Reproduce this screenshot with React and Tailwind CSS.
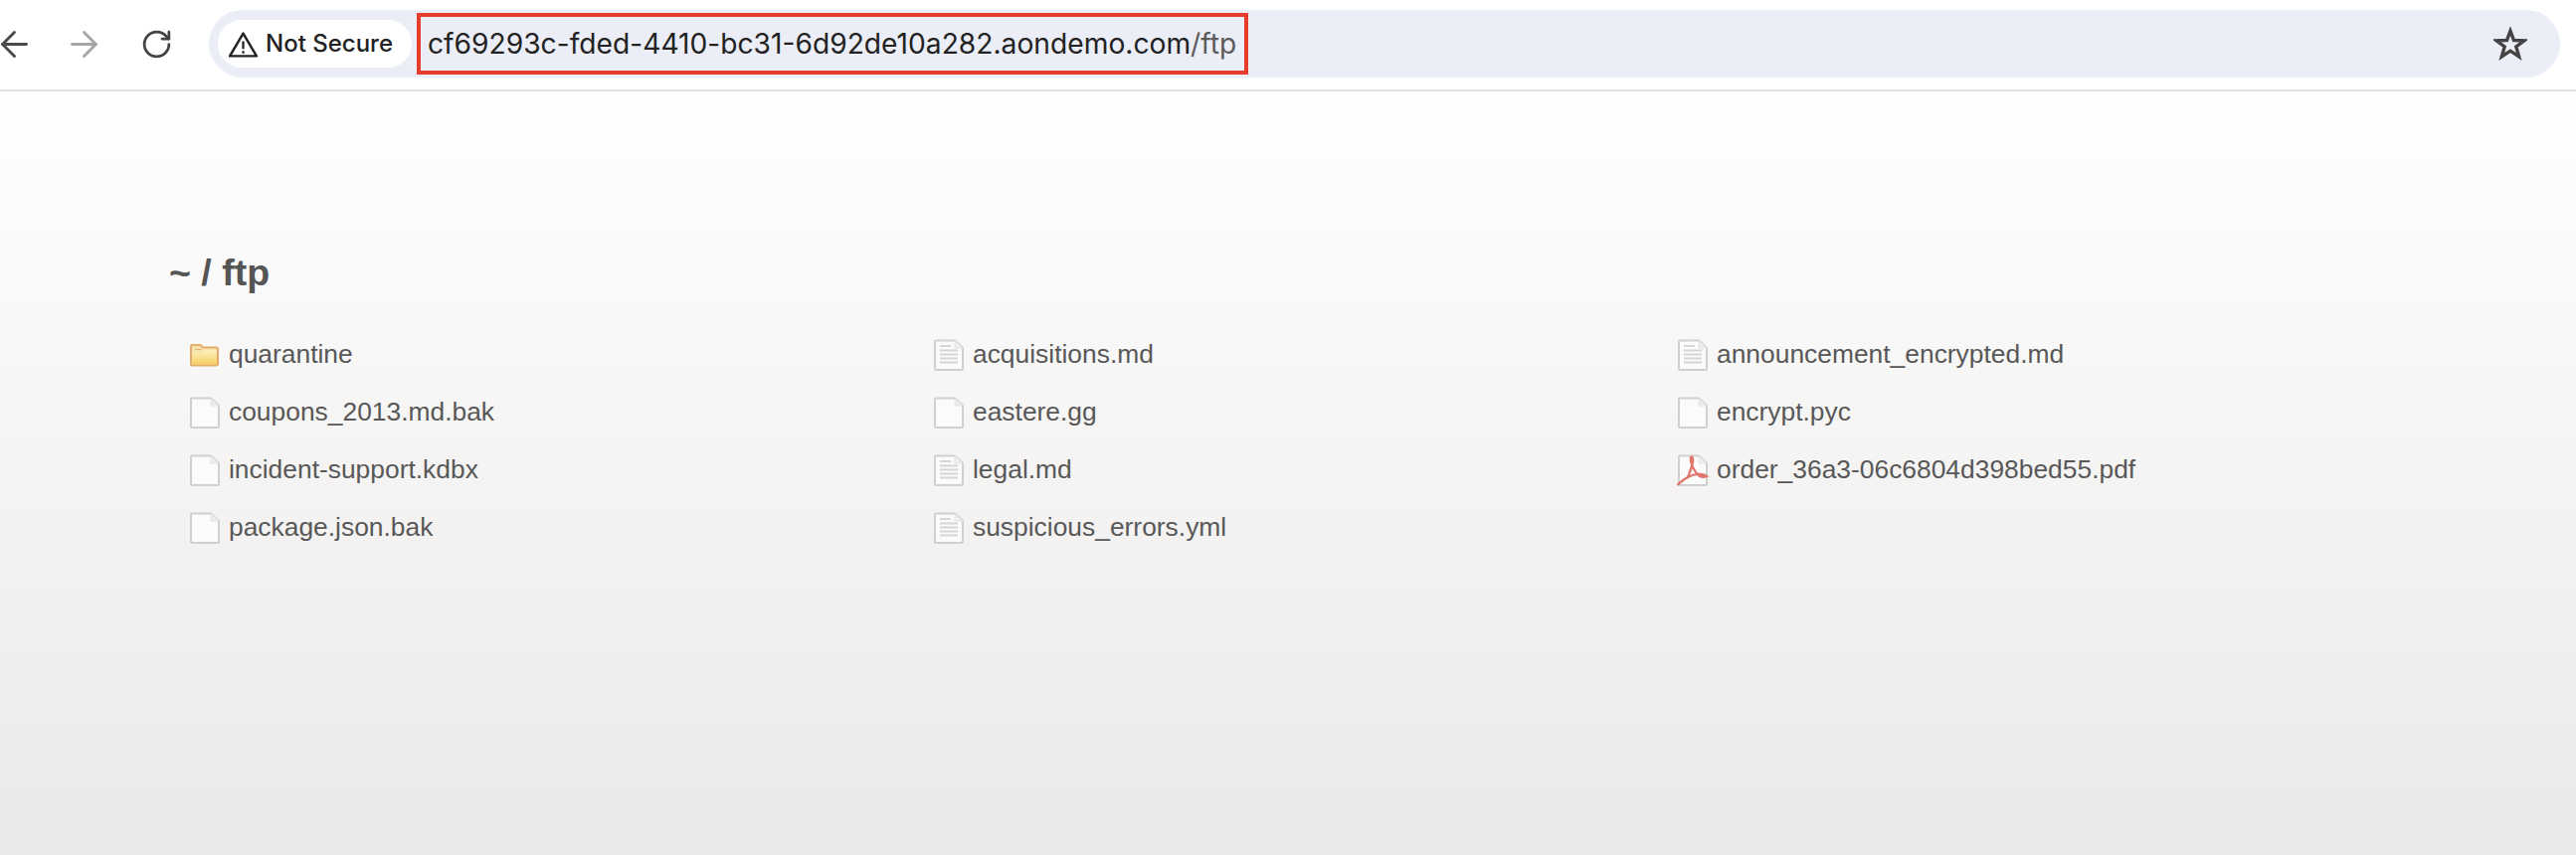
import { ArrowLeft, ArrowRight, RotateCw } from 'lucide-react'

const files = [
  ['quarantine', 'folder'],
  ['acquisitions.md', 'text'],
  ['announcement_encrypted.md', 'text'],
  ['coupons_2013.md.bak', 'blank'],
  ['eastere.gg', 'blank'],
  ['encrypt.pyc', 'blank'],
  ['incident-support.kdbx', 'blank'],
  ['legal.md', 'text'],
  ['order_36a3-06c6804d398bed55.pdf', 'pdf'],
  ['package.json.bak', 'blank'],
  ['suspicious_errors.yml', 'text'],
]

function FileIcon({ type }) {
  if (type === 'folder') {
    return (
      <svg width="31" height="32" viewBox="0 0 30 32" className="shrink-0 mr-[1px]">
        <defs>
          <linearGradient id="folderFill" x1="0" y1="0" x2="0" y2="1">
            <stop offset="0" stopColor="#fdf0c0" />
            <stop offset="1" stopColor="#f5cf60" />
          </linearGradient>
        </defs>
        <path d="M1.500 7.500 Q1.500 6 3 6 H11 L13.500 8.500 H27 Q28.500 8.500 28.500 10 V25 Q28.500 26.500 27 26.500 H3 Q1.500 26.500 1.500 25 Z" fill="#f6e3ab" stroke="#e5ab6a" strokeWidth="2" />
        <path d="M3 13 H11 L13 11.500 H27.500 V25.500 H3 Z" fill="url(#folderFill)" />
        <path d="M6 10.500 H12" stroke="#e5ab6a" strokeWidth="1" />
      </svg>
    )
  }
  return (
    <svg width="32" height="34" viewBox="0 0 32 34" className="shrink-0">
      <path d="M3 2.500 Q2 2.500 2 3.500 V31 Q2 32 3 32 H29 Q30 32 30 31 V10 L22 2.500 Z" fill="#fbfbfb" stroke="#d0d0d0" strokeWidth="2" />
      <path d="M22 2.500 V10 H30" fill="#eeeeee" stroke="#e2e2e2" strokeWidth="1" />
      {type === 'text' && (
        <path d="M7 8 H18 M7 12.500 H25 M7 16.500 H25 M7 20.500 H25 M7 24.500 H25" stroke="#d6d6d6" strokeWidth="2" />
      )}
      {type === 'pdf' && (
        <path d="M15 3 C12 5 15 13 19 19 C22 23 26 25 30 23 C26 20 18 20 11 24 C6 27 2 30 0.500 32 M15 3 C18 6 15 14 11 24" fill="none" stroke="#e0736b" strokeWidth="2.200" />
      )}
    </svg>
  )
}

export default function App() {
  return (
    <div className="w-[2590px] h-[860px] flex flex-col overflow-hidden bg-white font-['Liberation_Sans',sans-serif]">
      {/* Barra del navegador */}
      <header className="h-[92px] shrink-0 flex items-center border-b-2 border-[#e2e2e2] pb-[2px] pr-[16px]">
        <div className="w-[210px] shrink-0 flex items-center">
          <ArrowLeft className="-ml-[6px] text-[#4a4a4a] shrink-0" size={41} strokeWidth={1.700} />
          <ArrowRight className="ml-[29px] text-[#a6a6a6] shrink-0" size={41} strokeWidth={1.700} />
          <RotateCw className="ml-[36px] text-[#444444] shrink-0" size={33} strokeWidth={2} />
        </div>
        <div className="flex-1 h-[68px] rounded-full bg-[#ebeef6] flex items-center pl-[9px] pr-[33px]">
          <div className="w-[195px] h-[48px] rounded-full bg-white flex items-center pl-[10px] gap-[7px] shrink-0">
            <svg width="31" height="29" viewBox="0 0 30 27" fill="none" stroke="#222222" strokeWidth="2.400">
              <path d="M15 3 L28 25 H2 Z" strokeLinejoin="round" />
              <path d="M15 10.500 V18 M15 20 V22.500" strokeWidth="2.200" />
            </svg>
            <span className="font-['Inter',sans-serif] text-[24px] font-medium text-[#222222] whitespace-nowrap">Not Secure</span>
          </div>
          <div className="ml-[5px] w-[836px] h-[62px] border-[4px] border-[#e63c2a] flex items-center pl-[7px] shrink-0 font-['Inter',sans-serif] text-[28.200px] text-[#222222] whitespace-nowrap">
            cf69293c-fded-4410-bc31-6d92de10a282.aondemo.com<span className="text-[#5b5b5b]">/ftp</span>
          </div>
          <svg className="ml-auto" width="34" height="34" viewBox="0 0 34 34" fill="none" stroke="#444444" strokeWidth="3.400" strokeLinejoin="miter">
            <path d="M17 4 L20.500 13.500 L31 13.800 L22.800 20 L25.700 30 L17 24.200 L8.300 30 L11.200 20 L3 13.800 L13.500 13.500 Z" />
          </svg>
        </div>
      </header>

      {/* Listado */}
      <main className="flex-1 bg-gradient-to-b from-white to-[#ebe9e8] pl-[170px] pt-[157px]">
        <h1 className="text-[37.500px] leading-[50px] font-bold text-[#555555]">~ / ftp</h1>
        <ul className="mt-[29px] ml-[20px] grid grid-cols-[748px_748px_748px] auto-rows-[58px]">
          {files.map(([name, type]) => (
            <li key={name} className="flex items-center gap-[8px] text-[26.400px] text-[#585858] whitespace-nowrap">
              <FileIcon type={type} />
              {name}
            </li>
          ))}
        </ul>
      </main>
    </div>
  )
}
